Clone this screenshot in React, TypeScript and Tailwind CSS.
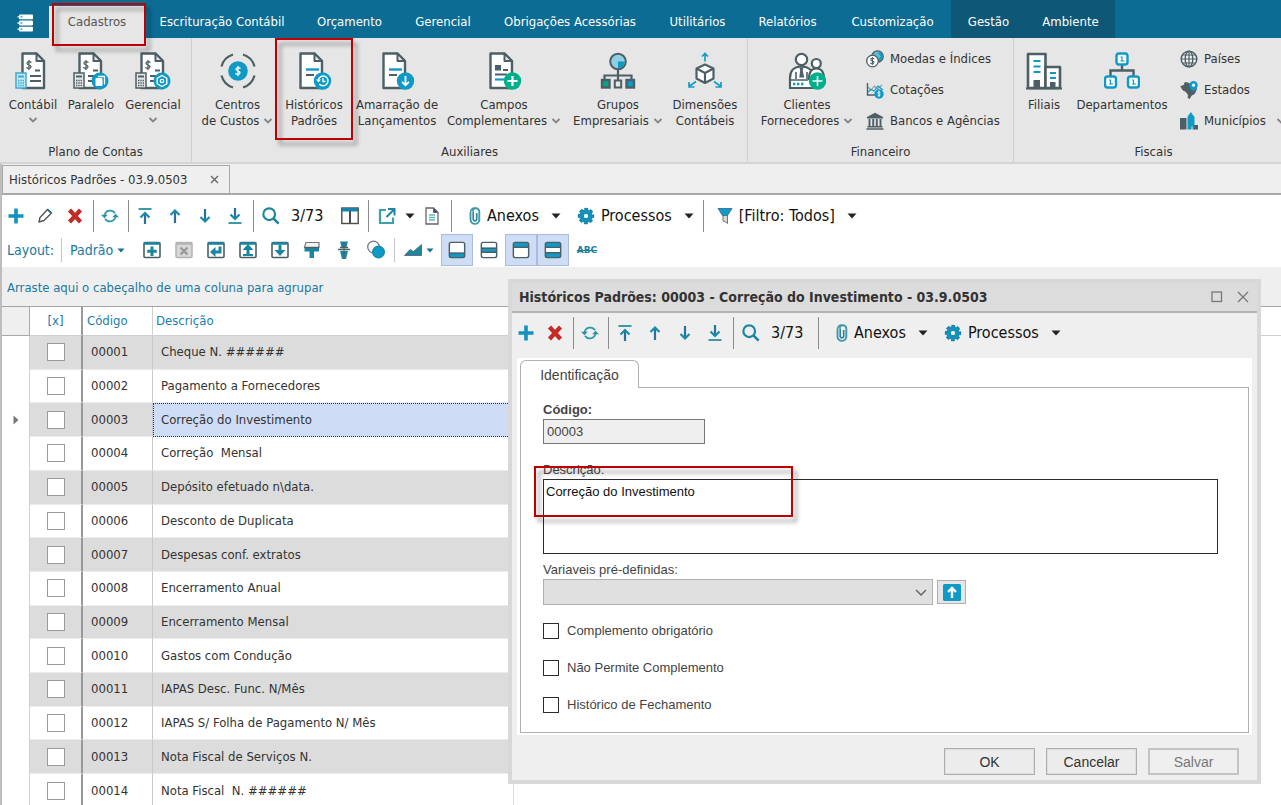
import type { ReactNode } from "react";

const INK = "#4d5f66";
const BLUE = "#0e9ac4";
const TEAL = "#1c86a0";

function Svg({ w, h, children, box }: { w: number; h: number; box?: string; children: ReactNode }) {
  return (
    <svg width={w} height={h} viewBox={box ?? `0 0 ${w} ${h}`} fill="none" aria-hidden="true" className="shrink-0">
      {children}
    </svg>
  );
}

/* ---------- Ribbon icons, 36 x 38 ---------- */

function Sheet({ x = 5 }: { x?: number }) {
  return (
    <g transform={`translate(${x} 0)`}>
      <path d="M1.500 1.500h14l7.500 7.500v27h-21.500z" fill="#fff" stroke={INK} strokeWidth="2.400" strokeLinejoin="round" />
      <path d="M15.500 1.500v7.500h7.500z" fill="#e6e6e6" stroke={INK} strokeWidth="2" strokeLinejoin="round" />
    </g>
  );
}

function Dollar({ x, y, color = INK, s = 1 }: { x: number; y: number; color?: string; s?: number }) {
  return (
    <path
      transform={`translate(${x} ${y}) scale(${s})`}
      d="M5 2.200C4.300 1.400 1 1.200 1 3.300 1 5.300 5 4.500 5 6.700 5 8.800 1.500 8.600.8 7.600M3 .3v9.400"
      stroke={color}
      strokeWidth="1.300"
      strokeLinecap="round"
    />
  );
}

function Calc({ color, fill }: { color: string; fill: string }) {
  return (
    <g>
      <rect x="1" y="21" width="10" height="15" fill={fill} stroke={color} strokeWidth="1.500" />
      <path d="M3 24.500h6" stroke={color} strokeWidth="2" />
      <path d="M3 28.500h6M3 31h6M3 33.500h6" stroke={color} strokeWidth="1.400" strokeDasharray="1.400 .9" />
    </g>
  );
}

function SheetLines() {
  return <path d="M20 18.500h5M15 24h11M15 29h11" stroke={INK} strokeWidth="2" />;
}

const IconContabil = () => (
  <Svg w={36} h={38}>
    <Sheet x={6} />
    <Dollar x={11} y={8} />
    <SheetLines />
    <Calc color="#3fa9cf" fill="#c4e9f5" />
  </Svg>
);

const IconParalelo = () => (
  <Svg w={36} h={38}>
    <Sheet x={5} />
    <Dollar x={10} y={8} />
    <SheetLines />
    <Calc color={INK} fill="#e6e6e6" />
    <circle cx="27" cy="29" r="8.500" fill={BLUE} />
    <rect x="22.500" y="26" width="7" height="8" rx="1" fill="#fff" />
    <path d="M25 24.500h6.500v8" stroke="#fff" strokeWidth="1.300" />
  </Svg>
);

const IconGerencial = () => (
  <Svg w={36} h={38}>
    <Sheet x={5} />
    <Dollar x={10} y={8} />
    <SheetLines />
    <Calc color={INK} fill="#e6e6e6" />
    <circle cx="27" cy="29" r="8.500" fill={BLUE} />
    <path d="M27 23.500l4.800 2.750v5.500L27 34.500l-4.800-2.750v-5.500z" stroke="#fff" strokeWidth="1.400" strokeLinejoin="round" />
    <circle cx="27" cy="29" r="1.700" stroke="#fff" strokeWidth="1.300" />
  </Svg>
);

const IconCentros = () => (
  <Svg w={36} h={38}>
    <path
      d="M1.500 14.500A17 17 0 0 1 13 2.500M23 2.500a17 17 0 0 1 11.500 12M34.500 23.500A17 17 0 0 1 23 35.500M13 35.500A17 17 0 0 1 1.500 23.500"
      stroke={INK}
      strokeWidth="2.200"
    />
    <circle cx="18" cy="19" r="9.800" fill={BLUE} />
    <Dollar x={15} y={14} color="#fff" />
  </Svg>
);

const IconHistoricos = () => (
  <Svg w={36} h={38}>
    <Sheet x={3} />
    <path d="M10 17.500h13" stroke={BLUE} strokeWidth="2.400" />
    <path d="M10 23h8" stroke={INK} strokeWidth="2" />
    <circle cx="26.500" cy="29" r="8.700" fill={BLUE} />
    <path d="M22.300 28a4.900 4.900 0 1 1 1 4" stroke="#fff" strokeWidth="1.400" />
    <path d="M20 27.500h5l-2.500 3z" fill="#fff" />
    <path d="M27 26v3.500h2.500" stroke="#fff" strokeWidth="1.300" />
  </Svg>
);

const IconAmarracao = () => (
  <Svg w={36} h={38}>
    <Sheet x={3} />
    <path d="M10 17.500h13" stroke={BLUE} strokeWidth="2.400" />
    <path d="M10 23h8" stroke={INK} strokeWidth="2" />
    <circle cx="26.500" cy="29" r="8.700" fill={BLUE} />
    <path d="M26.500 24v9M23 29.800l3.500 3.500 3.500-3.500" stroke="#fff" strokeWidth="1.800" />
  </Svg>
);

const IconCampos = () => (
  <Svg w={36} h={38}>
    <Sheet x={3} />
    <path d="M9 13h6v5.500H9z" fill={INK} />
    <path d="M17 18h5M9 22.500h12" stroke={INK} strokeWidth="1.800" />
    <path d="M9 27.500h9" stroke={BLUE} strokeWidth="2.200" />
    <circle cx="26.500" cy="29" r="8.700" fill="#00b08b" />
    <path d="M26.500 24v10M21.500 29h10" stroke="#fff" strokeWidth="2.200" />
  </Svg>
);

const IconGrupos = () => (
  <Svg w={36} h={38}>
    <circle cx="18" cy="9.500" r="7.800" fill="#8fcfe2" stroke={INK} strokeWidth="2" />
    <path d="M18 9.500h6.800A6.800 6.800 0 0 1 18 16.300z" fill={BLUE} />
    <path d="M18 18v10M4.500 28v-4.500h27V28" stroke={INK} strokeWidth="2.200" />
    <rect x="2" y="28" width="7.500" height="7.500" fill="#00a887" stroke={INK} strokeWidth="2.400" />
    <rect x="14.800" y="28.500" width="6.400" height="7" fill="#e6e6e6" stroke={INK} strokeWidth="2" />
    <rect x="26.500" y="28" width="7.500" height="7.500" fill={BLUE} stroke={INK} strokeWidth="2.400" />
  </Svg>
);

const IconDimensoes = () => (
  <Svg w={36} h={38}>
    <path d="M18 12.500l8.500 4v10l-8.500 4.500-8.500-4.500v-10z" fill="#fff" stroke={INK} strokeWidth="2.200" strokeLinejoin="round" />
    <path d="M9.500 16.500l8.500 4.500 8.500-4.500M18 21v10" stroke={INK} strokeWidth="2.200" />
    <path d="M18 9.500V2M15 4.500l3-3 3 3M9 29.500l-7 5M2 30v5h5.500M27 29.500l7 5M34 30v5h-5.500" stroke="#159dc6" strokeWidth="1.700" />
  </Svg>
);

const IconClientes = () => (
  <Svg w={38} h={38}>
    <path d="M2 26C2 19 6 14.500 13.500 14.500S25 19 25 26v10H2z" fill="#fff" stroke={INK} strokeWidth="2.200" />
    <path d="M21 27c0-7 2-10.500 7.500-10.500S36 20 36 27z" fill="#fff" stroke={INK} strokeWidth="2.200" />
    <circle cx="13.500" cy="7.500" r="5.700" fill="#fff" stroke={INK} strokeWidth="2.200" />
    <circle cx="28.300" cy="11.500" r="4.500" fill="#fff" stroke={INK} strokeWidth="2.200" />
    <path d="M11.500 15.500h4l-.8 3 1.500 7h-5l1-7z" fill={INK} />
    <path d="M8 20v7M19 20v7M2 28h18" stroke={INK} strokeWidth="1.600" />
    <path d="M5 32h11" stroke={BLUE} strokeWidth="2.400" strokeDasharray="2.400 1.600" />
    <circle cx="29.500" cy="29" r="8.700" fill="#00b08b" />
    <path d="M29.500 24v10M24.500 29h10" stroke="#fff" strokeWidth="1.600" />
  </Svg>
);

const IconFiliais = () => (
  <Svg w={36} h={38}>
    <path d="M2 36V2h17.500v34z" fill="#fff" stroke={INK} strokeWidth="2.600" strokeLinejoin="round" />
    <path d="M19.500 36V15H34v21z" fill="#fff" stroke={INK} strokeWidth="2.600" strokeLinejoin="round" />
    <path d="M7.500 9h7M7.500 14.500h7M7.500 20h7M24 21h6M24 26h6" stroke={BLUE} strokeWidth="2" />
    <path d="M7.500 28h6.500v8H7.500zM24 30h5.500v6H24z" fill={INK} />
    <path d="M0 36.500h36" stroke={INK} strokeWidth="2" />
  </Svg>
);

const IconDepartamentos = () => (
  <Svg w={36} h={38}>
    <path d="M18 13v5.500M6.500 24v-5.500h23V24" stroke={INK} strokeWidth="2.400" />
    {[[12.5, 1.5], [1, 24.5], [24, 24.5]].map(([x, y]) => (
      <g key={`${x}-${y}`}>
        <rect x={x} y={y} width="11" height="11" rx="2.500" fill="#fff" stroke={BLUE} strokeWidth="2.400" />
        <path d={`M${x + 4} ${y + 3.500}h1.500v4M${x + 4} ${y + 7.500}h4`} stroke={BLUE} strokeWidth="1.200" />
      </g>
    ))}
  </Svg>
);

/* ---------- Small ribbon icons, 18 x 18 ---------- */

const IconMoedas = () => (
  <Svg w={18} h={18}>
    <circle cx="11.500" cy="6.500" r="5.700" fill="#5bbcd8" stroke={INK} strokeWidth="1.300" />
    <path d="M13 2.500l3 4-3 4" stroke={BLUE} strokeWidth="2" />
    <circle cx="6.500" cy="11" r="5.800" fill="#fff" stroke={INK} strokeWidth="1.300" />
    <Dollar x={4} y={7} s={0.8} />
  </Svg>
);
const IconCotacoes = () => (
  <Svg w={18} h={18}>
    <path d="M1.500 2v12H11" stroke={INK} strokeWidth="1.400" />
    <path d="M2 6l3 3 3.500-4 3 3L16 4" stroke="#8a979b" strokeWidth="1.100" />
    <path d="M2 11l3-2.500 3 1.500 4-5 5 4" stroke={BLUE} strokeWidth="1.100" />
    <circle cx="13" cy="13" r="4.700" fill={BLUE} />
    <Dollar x={11.200} y={9.800} s={0.6} color="#fff" />
  </Svg>
);
const IconBanco = () => (
  <Svg w={18} h={18}>
    <path d="M9 .8L17 5v1.500H1V5z" fill={INK} />
    <path d="M3.500 7v7M7.200 7v7M10.800 7v7M14.500 7v7" stroke={INK} strokeWidth="1.900" />
    <path d="M1.500 14.700h15M.5 17h17" stroke={INK} strokeWidth="1.500" />
  </Svg>
);
const IconPaises = () => (
  <Svg w={18} h={18}>
    <circle cx="9" cy="9" r="7.800" stroke={INK} strokeWidth="1.500" fill="#f4f4f4" />
    <ellipse cx="9" cy="9" rx="3.800" ry="7.800" stroke={INK} strokeWidth="1.400" />
    <path d="M9 1v16M1.500 9h15M2.500 5h13M2.500 13h13" stroke={INK} strokeWidth="1.200" />
  </Svg>
);
const IconEstados = () => (
  <Svg w={18} h={18}>
    <path d="M.8 5.500L4 4.500 5 1.500l4 .8 1.500 1.500L14 5.500l2.500 1.800-1 3.200L14 13l-2.500 1-2 3.500-1.500-1 .5-2.500L6 10.500 3 9z" fill={INK} stroke={INK} />
    <path d="M13.500 0a4.200 4.200 0 0 1 4.200 4.200c0 3-4.200 6.300-4.200 6.300S9.300 7.200 9.300 4.200A4.200 4.200 0 0 1 13.500 0z" fill={BLUE} />
    <circle cx="13.500" cy="4.200" r="1.600" fill="#fff" />
  </Svg>
);
const IconMunicipios = () => (
  <Svg w={18} h={18}>
    <path d="M0 6h6.500v11.500H0z" fill={INK} />
    <path d="M7.500 17.500V5L9 2.500 11 0l1.500 2.500L14.500 5v12.500h-2v-3h-1v3z" fill={BLUE} />
    <path d="M14 13h4v4.500h-4z" fill={INK} />
  </Svg>
);

/* ---------- Toolbar icons, 18 x 18 ---------- */

const TPlus = () => (
  <Svg w={18} h={18}><path d="M9 1.500v15M1.500 9h15" stroke="#1391bf" strokeWidth="3.600" /></Svg>
);
const TPencil = () => (
  <Svg w={18} h={18}>
    <path d="M3 15l1-4.500 7.500-8L15.500 6 8 13.500z" fill="#fff" stroke="#555" strokeWidth="1.400" strokeLinejoin="round" />
    <path d="M11 3l1-1.200 4 3.700L14.800 7z" fill="#1f6f94" />
  </Svg>
);
const TDelete = () => (
  <Svg w={18} h={18}><path d="M3.500 3l11 12M14.500 3l-11 12" stroke="#c52b26" strokeWidth="4.200" /></Svg>
);
const TRefresh = () => (
  <Svg w={18} h={18} box="0 0 20 18">
    <path d="M4 8a6.300 6.300 0 0 1 11.500-2M16 10a6.300 6.300 0 0 1-11.500 2" stroke="#2c9aa5" strokeWidth="2" />
    <path d="M0 7.500h7.500L3.800 11.500zM12.500 10.500H20L16.200 6.500z" fill="#2c8fa0" />
  </Svg>
);
const Arrow = ({ down, bar }: { down?: boolean; bar?: boolean }) => (
  <Svg w={18} h={18}>
    <g transform={down ? "rotate(180 9 9)" : undefined}>
      <path d={bar ? "M9 17V6" : "M9 16V4"} stroke="#2a6f9e" strokeWidth="2.200" />
      <path d={bar ? "M4.500 10.500L9 6l4.500 4.500" : "M4.500 8L9 3.500 13.500 8"} stroke="#1a8bab" strokeWidth="2.200" />
      {bar && <path d="M2.500 2h13" stroke="#3d9aa3" strokeWidth="2" />}
    </g>
  </Svg>
);
const TSearch = () => (
  <Svg w={18} h={18} box="0 0 20 20">
    <circle cx="8" cy="8" r="6.500" stroke={TEAL} strokeWidth="2.400" />
    <path d="M12.500 12.500l6 6" stroke={TEAL} strokeWidth="2.800" />
  </Svg>
);
const TColumns = () => (
  <Svg w={18} h={18}>
    <rect x=".8" y="1" width="16.400" height="15.500" fill="#fff" stroke="#4d4d4d" strokeWidth="1.400" />
    <path d="M1 2.800h16" stroke="#1483ad" strokeWidth="3.400" />
    <path d="M9 4v12" stroke="#4d4d4d" strokeWidth="2" />
  </Svg>
);
const TExport = () => (
  <Svg w={18} h={18}>
    <path d="M8 3H2v13h13v-5.500" stroke="#3aa2ab" strokeWidth="2.200" />
    <path d="M10 2h6.500v6.500M16 2.500L8.500 10" stroke="#1b84a7" strokeWidth="2" />
  </Svg>
);
const TDoc = () => (
  <Svg w={14} h={18}>
    <path d="M1 1h7.500L13 5.500V17H1z" fill="#fff" stroke="#666" strokeWidth="1.300" />
    <path d="M8.500 1v4.500H13z" fill="#447" stroke="#666" />
    <path d="M4 8h6M4 10.500h6M4 13h6" stroke="#5db9bd" strokeWidth="1.300" />
  </Svg>
);
const TClip = () => (
  <Svg w={12} h={18}>
    <path d="M1.500 5.500v7a4.300 4.300 0 0 0 8.800 0V4.600a3.400 3.400 0 0 0-6.800 0" stroke="#3f9aa4" strokeWidth="1.900" />
    <path d="M1.500 6V4.800A4.400 4.400 0 0 1 6 .9" stroke="#3f9aa4" strokeWidth="1.500" />
    <path d="M4.200 4.500v8a1.800 1.800 0 0 0 3.500 0V6" stroke="#2f7f9c" strokeWidth="1.600" />
  </Svg>
);
const TGear = () => (
  <Svg w={18} h={18}>
    <circle cx="9" cy="9" r="6.600" stroke={TEAL} strokeWidth="3.200" strokeDasharray="3.450 1.730" strokeDashoffset="1.700" />
    <circle cx="9" cy="9" r="4.400" stroke="#1590ba" strokeWidth="4.600" />
    <circle cx="9" cy="9" r="1.900" fill="#eef3f5" />
  </Svg>
);
const TFunnel = () => (
  <Svg w={16} h={18}>
    <path d="M6 8h4.500v8.500l-2-1.500L6 14z" fill="#d9d9d9" stroke="#777" />
    <path d="M1 1.500h14L10.500 8.500h-5z" fill="#1698c6" stroke="#3b7f9c" />
  </Svg>
);

/* ---------- Layout bar icons, 18 x 18 ---------- */

function Win({ muted, children }: { muted?: boolean; children: ReactNode }) {
  const c = muted ? "#b5b5b5" : INK;
  return (
    <Svg w={18} h={18}>
      <rect x="1" y="1.500" width="16" height="15" rx="1" fill={muted ? "#d8d8d8" : "#fff"} stroke={c} strokeWidth="1.600" />
      <path d="M1 2.500h16" stroke={muted ? c : TEAL} strokeWidth="2.600" />
      {children}
    </Svg>
  );
}
const LAdd = () => <Win><path d="M9 5.500v9.500M4.200 10.200h9.600" stroke={TEAL} strokeWidth="3" /></Win>;
const LRemove = () => <Win muted><path d="M5.500 6.500l7 7M12.500 6.500l-7 7" stroke="#999" strokeWidth="2.400" /></Win>;
const LReturn = () => (
  <Win>
    <path d="M13 5.500v5.500H7" stroke={TEAL} strokeWidth="3" />
    <path d="M3 11l5.500-5v10z" fill={TEAL} />
  </Win>
);
const LUp = () => (
  <Win>
    <path d="M9 14V7" stroke={TEAL} strokeWidth="3" />
    <path d="M3.500 9L9 3l5.500 6z" fill={TEAL} />
    <path d="M4 14h10" stroke={TEAL} strokeWidth="2" />
  </Win>
);
const LDown = () => (
  <Win>
    <path d="M9 4v7" stroke={TEAL} strokeWidth="3" />
    <path d="M3.500 9L9 15l5.500-6z" fill={TEAL} />
  </Win>
);
const LBrush = () => (
  <Svg w={18} h={18}>
    <path d="M3 1.500h13v5H1.500z" fill="#f2f2f2" stroke="#777" strokeWidth="1.200" />
    <path d="M1.500 6h14.500v4.500H11V17H6.500v-6.500h-5z" fill={TEAL} />
    <path d="M1.500 6.500H16" stroke={INK} strokeWidth="1.400" />
  </Svg>
);
const LPin = () => (
  <Svg w={18} h={18}>
    <path d="M5 .5h8L11.500 6h-5zM5 10h8l-2 8H7z" fill={TEAL} />
    <path d="M3 8.500h12M5 6.500h8" stroke={INK} strokeWidth="1.500" />
    <path d="M9 1v16" stroke={INK} strokeWidth="1" />
  </Svg>
);
const LCircles = () => (
  <Svg w={20} h={20}>
    <circle cx="7.500" cy="7" r="5.800" fill="#fff" stroke="#777" strokeWidth="1.300" />
    <circle cx="12.500" cy="12" r="5.800" fill={BLUE} stroke={TEAL} strokeWidth="1.300" />
  </Svg>
);
const LChart = () => (
  <Svg w={18} h={14}>
    <path d="M.5 12.500L6 6.500l3.500 2L17.500 1.500v11z" fill={TEAL} stroke={INK} strokeWidth=".8" />
  </Svg>
);
const Pane = ({ d, lines }: { d: string; lines?: string }) => (
  <Svg w={18} h={18} box="0 0 20 20">
    <rect x="1.500" y="1.500" width="17" height="17" rx="2" fill="#fff" />
    <path d={d} fill={BLUE} />
    {lines && <path d={lines} stroke={INK} strokeWidth="1.500" />}
    <rect x="1.500" y="1.500" width="17" height="17" rx="2" stroke={INK} strokeWidth="1.600" />
  </Svg>
);

/* ---------- Shared pieces ---------- */

const Chevron = () => (
  <Svg w={10} h={6}><path d="M1.500 1L5 4.500 8.500 1" stroke="#858585" strokeWidth="1.800" /></Svg>
);
const Caret = () => (
  <Svg w={10} h={6}><path d="M.5.500h9L5 5.500z" fill="#222" /></Svg>
);
const BlueCaret = () => (
  <Svg w={8} h={5}><path d="M.5.500h7L4 4.500z" fill="#176f96" /></Svg>
);

function Callout({ className }: { className: string }) {
  return (
    <span
      aria-hidden="true"
      className={`pointer-events-none absolute z-10 border-2 border-[#c00000] drop-shadow-[4px_5px_2px_rgba(0,0,0,0.4)] ${className}`}
    />
  );
}

function BigButton({ icon, lines, chevron, w, callout }: { icon: ReactNode; lines: string[]; chevron?: "inline" | "below"; w: string; callout?: boolean }) {
  return (
    <button type="button" className={`relative flex h-[102px] shrink-0 flex-col items-center pt-[14px] ${w}`}>
      {icon}
      <span className="mt-[7px] block whitespace-nowrap text-center leading-4">
        {lines.map((line, i) => (
          <span key={line} className="flex items-center justify-center gap-1">
            {line}
            {chevron === "inline" && i === lines.length - 1 && <Chevron />}
          </span>
        ))}
        {chevron === "below" && <span className="flex h-[14px] items-center justify-center"><Chevron /></span>}
      </span>
      {callout && <Callout className="inset-0" />}
    </button>
  );
}

function SmallButton({ icon, label, chevron }: { icon: ReactNode; label: string; chevron?: boolean }) {
  return (
    <button type="button" className="flex h-[31px] items-center gap-[6px] whitespace-nowrap">
      {icon}
      {label}
      {chevron && <span className="ml-1"><Chevron /></span>}
    </button>
  );
}

function Group({ title, w, pad, children }: { title: string; w: string; pad: string; children: ReactNode }) {
  return (
    <section aria-label={title} className={`flex shrink-0 flex-col border-r border-[#cfcfcf] ${w}`}>
      <div className={`flex ${pad}`}>{children}</div>
      <p className="pt-[4px] text-center leading-4">{title}</p>
    </section>
  );
}

function Tool({ label, w = "w-[30px]", children }: { label: string; w?: string; children: ReactNode }) {
  return (
    <button type="button" aria-label={label} className={`flex h-8 shrink-0 items-center justify-center ${w}`}>
      {children}
    </button>
  );
}

function MenuTool({ icon, label, gap }: { icon: ReactNode; label: string; gap: string }) {
  return (
    <button type="button" className={`flex h-8 shrink-0 items-center whitespace-nowrap ${gap}`}>
      <span className="mr-[6px]">{icon}</span>
      {label}
      <span className="ml-3"><Caret /></span>
    </button>
  );
}

const Sep = () => <span className="ml-[3px] mr-px h-8 w-px shrink-0 bg-[#8c8c8c]" />;

function Navigation() {
  return (
    <>
      <Tool label="Primeiro"><Arrow bar /></Tool>
      <Tool label="Anterior"><Arrow /></Tool>
      <Tool label="Próximo"><Arrow down /></Tool>
      <Tool label="Último"><Arrow bar down /></Tool>
      <Sep />
      <Tool label="Pesquisar" w="w-8"><TSearch /></Tool>
      <span className="w-12 pl-1">3/73</span>
    </>
  );
}

function LayoutTool({ label, on, children }: { label: string; on?: boolean; children: ReactNode }) {
  return (
    <button
      type="button"
      aria-label={label}
      aria-pressed={on}
      className={`flex h-8 w-8 shrink-0 items-center justify-center border ${on ? "border-[#aab9dc] bg-[#cfdcf5]" : "border-transparent"}`}
    >
      {children}
    </button>
  );
}

const tabs = [
  { label: "Escrituração Contábil", w: "w-[154px]" },
  { label: "Orçamento", w: "w-[101px]" },
  { label: "Gerencial", w: "w-[86px]" },
  { label: "Obrigações Acessórias", w: "w-[168px]" },
  { label: "Utilitários", w: "w-[87px]" },
  { label: "Relatórios", w: "w-[93px]" },
  { label: "Customização", w: "w-[117px]" },
];

const rows = [
  ["00001", "Cheque N. ######"],
  ["00002", "Pagamento a Fornecedores"],
  ["00003", "Correção do Investimento"],
  ["00004", "Correção  Mensal"],
  ["00005", "Depósito efetuado n\\data."],
  ["00006", "Desconto de Duplicata"],
  ["00007", "Despesas conf. extratos"],
  ["00008", "Encerramento Anual"],
  ["00009", "Encerramento Mensal"],
  ["00010", "Gastos com Condução"],
  ["00011", "IAPAS Desc. Func. N/Mês"],
  ["00012", "IAPAS S/ Folha de Pagamento N/ Mês"],
  ["00013", "Nota Fiscal de Serviços N."],
  ["00014", "Nota Fiscal  N. ######"],
];

const selected = "00003";

function TopBar() {
  return (
    <nav className="flex h-[38px] shrink-0 items-stretch bg-[#0d6c94] text-white">
      <button type="button" aria-label="Menu" className="flex w-[49px] items-center justify-center pt-2">
        <Svg w={16} h={18}>
          <rect x="2" y=".5" width="14" height="4.800" rx="1" fill="#fff" />
          <rect x="2" y="6.600" width="14" height="4.800" rx="1" fill="#fff" />
          <rect x="2" y="12.700" width="14" height="4.800" rx="1" fill="#fff" />
          <path d="M.5 2.900h3M.5 9h3M.5 15.100h3" stroke="#fff" strokeWidth="1.400" />
          <path d="M3.500 2.900h2M3.500 9h2M3.500 15.100h2" stroke="#0d6c94" strokeWidth="1" />
        </Svg>
      </button>
      <a href="#cadastros" aria-current="page" className="relative mt-[6px] flex w-24 items-center justify-center bg-[#e6e6e6] text-[#555]">
        Cadastros
        <Callout className="-top-[3px] left-[3px] h-[43px] w-[94px]" />
      </a>
      {tabs.map((t) => (
        <a key={t.label} href="#aba" className={`flex shrink-0 items-center justify-center whitespace-nowrap pt-[6px] ${t.w}`}>
          {t.label}
        </a>
      ))}
      <div className="flex w-[164px] shrink-0 bg-[#0f5777]">
        <a href="#gestao" className="flex w-[75px] items-center justify-center pt-[6px]">Gestão</a>
        <a href="#ambiente" className="flex flex-1 items-center justify-center pt-[6px]">Ambiente</a>
      </div>
    </nav>
  );
}

function Ribbon() {
  return (
    <div className="flex h-[126px] shrink-0 overflow-hidden border-b-2 border-[#d4d4d4] bg-[#e6e6e6] text-[#333]">
      <Group title="Plano de Contas" w="w-48" pad="pl-1">
        <BigButton w="w-[58px]" icon={<IconContabil />} lines={["Contábil"]} chevron="below" />
        <BigButton w="w-[58px]" icon={<IconParalelo />} lines={["Paralelo"]} />
        <BigButton w="w-[66px]" icon={<IconGerencial />} lines={["Gerencial"]} chevron="below" />
      </Group>
      <Group title="Auxiliares" w="w-[556px]" pad="pl-2">
        <BigButton w="w-[75px]" icon={<IconCentros />} lines={["Centros", "de Custos"]} chevron="inline" />
        <BigButton w="w-[78px]" icon={<IconHistoricos />} lines={["Históricos", "Padrões"]} callout />
        <BigButton w="w-[88px]" icon={<IconAmarracao />} lines={["Amarração de", "Lançamentos"]} />
        <BigButton w="w-[126px]" icon={<IconCampos />} lines={["Campos", "Complementares"]} chevron="inline" />
        <BigButton w="w-[102px]" icon={<IconGrupos />} lines={["Grupos", "Empresariais"]} chevron="inline" />
        <BigButton w="w-[72px]" icon={<IconDimensoes />} lines={["Dimensões", "Contábeis"]} />
      </Group>
      <Group title="Financeiro" w="w-[266px]" pad="pl-2">
        <BigButton w="w-[102px]" icon={<IconClientes />} lines={["Clientes", "Fornecedores"]} chevron="inline" />
        <div className="pl-2 pt-[5px]">
          <SmallButton icon={<IconMoedas />} label="Moedas e Índices" />
          <SmallButton icon={<IconCotacoes />} label="Cotações" />
          <SmallButton icon={<IconBanco />} label="Bancos e Agências" />
        </div>
      </Group>
      <Group title="Fiscais" w="w-[280px]" pad="pl-[3px]">
        <BigButton w="w-[54px]" icon={<IconFiliais />} lines={["Filiais"]} />
        <BigButton w="w-[102px]" icon={<IconDepartamentos />} lines={["Departamentos"]} />
        <div className="pl-[7px] pt-[5px]">
          <SmallButton icon={<IconPaises />} label="Países" />
          <SmallButton icon={<IconEstados />} label="Estados" />
          <SmallButton icon={<IconMunicipios />} label="Municípios" chevron />
        </div>
      </Group>
    </div>
  );
}

function MainToolbar() {
  return (
    <div role="toolbar" aria-label="Registros" className="flex h-[38px] shrink-0 items-center overflow-hidden pt-[3px] text-[16px] text-[#111]">
      <Tool label="Novo" w="w-7"><TPlus /></Tool>
      <Tool label="Editar"><TPencil /></Tool>
      <Tool label="Excluir"><TDelete /></Tool>
      <Sep />
      <Tool label="Atualizar"><TRefresh /></Tool>
      <Sep />
      <Navigation />
      <Tool label="Colunas"><TColumns /></Tool>
      <Sep />
      <Tool label="Exportar" w="w-[34px]"><TExport /></Tool>
      <Tool label="Opções de exportação" w="w-3"><Caret /></Tool>
      <Tool label="Relatório" w="w-8"><TDoc /></Tool>
      <Sep />
      <MenuTool gap="ml-4" icon={<TClip />} label="Anexos" />
      <MenuTool gap="ml-4" icon={<TGear />} label="Processos" />
      <span className="ml-[6px] flex"><Sep /></span>
      <MenuTool gap="ml-3" icon={<TFunnel />} label="[Filtro: Todos]" />
    </div>
  );
}

function LayoutBar() {
  return (
    <div role="toolbar" aria-label="Layout" className="flex h-[34px] shrink-0 items-center overflow-hidden pl-[5px] text-[#1b78a3]">
      <span className="w-[54px] text-[14px]">Layout:</span>
      <span className="h-6 w-px bg-[#c4c4c4]" />
      <button type="button" className="flex w-[74px] items-center gap-1 pl-2 text-[14px]">Padrão <BlueCaret /></button>
      <LayoutTool label="Adicionar"><LAdd /></LayoutTool>
      <LayoutTool label="Remover"><LRemove /></LayoutTool>
      <LayoutTool label="Restaurar"><LReturn /></LayoutTool>
      <LayoutTool label="Exportar layout"><LUp /></LayoutTool>
      <LayoutTool label="Importar layout"><LDown /></LayoutTool>
      <LayoutTool label="Formatar"><LBrush /></LayoutTool>
      <LayoutTool label="Fixar"><LPin /></LayoutTool>
      <LayoutTool label="Comparar"><LCircles /></LayoutTool>
      <span className="mx-[2px] h-6 w-px bg-[#c4c4c4]" />
      <button type="button" aria-label="Gráfico" className="flex w-11 items-center justify-center gap-1">
        <LChart /><BlueCaret />
      </button>
      <LayoutTool label="Painel inferior" on><Pane d="M2 13h16v5H2z" lines="M2 13.500h16" /></LayoutTool>
      <LayoutTool label="Painel central"><Pane d="M2 7.500h16v5H2z" lines="M2 8h16M2 12.500h16" /></LayoutTool>
      <LayoutTool label="Painel superior" on><Pane d="M2 2h16v5H2z" lines="M2 7h16" /></LayoutTool>
      <LayoutTool label="Painéis duplos" on><Pane d="M2 2h16v5H2zM2 13h16v5H2z" lines="M2 7h16M2 13h16" /></LayoutTool>
      <button type="button" className="flex w-9 items-center justify-center font-['DejaVu_Sans',sans-serif] text-[9px] font-bold text-[#1c7f9b] line-through">ABC</button>
    </div>
  );
}

function Grid() {
  return (
    <div className="min-h-0 flex-1 overflow-hidden border-t border-[#a3a3a3] bg-white">
      <div className="h-[29px] border-b border-[#cfcfcf]" />
      <table className="-mt-[29px] h-[501px] w-[512px] table-fixed border-separate border-spacing-0 text-left text-[#333]">
        <colgroup>
          <col className="w-7" />
          <col className="w-[53px]" />
          <col className="w-[70px]" />
          <col />
        </colgroup>
        <thead>
          <tr className="h-[29px] text-[#1580ad]">
            <th aria-label="Indicador" className="h-[29px] border-b border-r border-[#a8a8a8] bg-[#efefef] p-0" />
            <th className="border-b border-r-2 border-b-[#cfcfcf] border-r-[#999] p-0 text-center font-normal">[x]</th>
            <th className="border-b border-r border-[#cfcfcf] p-0 pl-1 font-normal">Código</th>
            <th className="border-b border-[#cfcfcf] p-0 pl-[3px] font-normal">Descrição</th>
          </tr>
        </thead>
        <tbody>
          {rows.map(([code, text]) => (
            <tr key={code} className="group">
              <td className="border-r border-[#cfcfcf] bg-white p-0">
                {code === selected && (
                  <span className="flex justify-center">
                    <Svg w={6} h={10}><path d="M.5.500L5.500 5 .5 9.500z" fill="#777" /></Svg>
                  </span>
                )}
              </td>
              <td className="border-b border-r-2 border-b-[#ececec] border-r-[#999] p-0 group-odd:bg-[#dcdcdc]">
                <input
                  type="checkbox"
                  aria-label={`Selecionar ${code}`}
                  className="mx-auto block h-[18px] w-[18px] appearance-none border border-[#9a9a9a] bg-white"
                />
              </td>
              <td className="border-b border-r border-b-[#ececec] border-r-[#c8c8c8] p-0 pl-2 group-odd:bg-[#dcdcdc]">{code}</td>
              {code === selected ? (
                <td className="border border-dotted border-[#333] bg-[#cfdcf5] p-0 pl-[7px]">{text}</td>
              ) : (
                <td className="whitespace-pre border-b border-r border-b-[#ececec] border-r-[#dcdcdc] p-0 pl-2 group-odd:bg-[#dcdcdc]">{text}</td>
              )}
            </tr>
          ))}
        </tbody>
      </table>
    </div>
  );
}

function Check({ id, label }: { id: string; label: string }) {
  return (
    <div className="flex h-[17px] items-center gap-2">
      <input id={id} type="checkbox" className="h-4 w-4 appearance-none border border-[#2b2b2b] bg-white" />
      <label htmlFor={id}>{label}</label>
    </div>
  );
}

function RecordDialog() {
  return (
    <div
      role="dialog"
      aria-labelledby="dialog-title"
      className="absolute left-[508px] top-[279px] z-20 w-[753px] border-4 border-[#d8d8d8] bg-[#efefef]"
    >
      <header className="flex h-[30px] items-center justify-between border-b-2 border-[#b4b4b4] bg-[#dcdcdc] pl-[7px] pr-2">
        <h2 id="dialog-title" className="whitespace-nowrap text-[14px] font-bold text-[#333]">
          Históricos Padrões: 00003 - Correção do Investimento - 03.9.0503
        </h2>
        <div className="flex gap-[14px]">
          <button type="button" aria-label="Maximizar"><Svg w={12} h={12}><rect x="1" y="1" width="9.500" height="9.500" stroke="#777" strokeWidth="1.300" /></Svg></button>
          <button type="button" aria-label="Fechar"><Svg w={12} h={12}><path d="M1 1l10 10M11 1L1 11" stroke="#777" strokeWidth="1.300" /></Svg></button>
        </div>
      </header>

      <div role="toolbar" aria-label="Registro" className="flex h-[45px] items-center overflow-hidden pb-[5px] text-[16px] text-[#111]">
        <Tool label="Novo" w="w-7"><TPlus /></Tool>
        <Tool label="Excluir"><TDelete /></Tool>
        <Sep />
        <Tool label="Atualizar"><TRefresh /></Tool>
        <Sep />
        <Navigation />
        <Sep />
        <MenuTool gap="ml-4" icon={<TClip />} label="Anexos" />
        <MenuTool gap="ml-4" icon={<TGear />} label="Processos" />
      </div>

      <div className="mx-[5px] bg-white px-[3px] pb-[2px] pt-[2px] font-['Liberation_Sans',Arial,sans-serif] text-[13px] leading-4 text-[#444]">
        <button type="button" role="tab" aria-selected="true" className="relative -mb-px flex h-7 w-[119px] items-center justify-center rounded-t-md border border-b-0 border-[#b0b0b0] bg-white text-[14px]">
          Identificação
        </button>
        <div className="h-[346px] border border-[#b0b0b0] pl-[22px] pr-[30px] pt-[14px]">
          <label htmlFor="codigo" className="block font-bold">Código:</label>
          <input id="codigo" readOnly value="00003" className="mt-px block h-[25px] w-[162px] border border-[#777] bg-[#efefef] px-[3px]" />
          <label htmlFor="descricao" className="mt-[18px] block">Descrição:</label>
          <div className="relative mt-px">
            <textarea id="descricao" defaultValue="Correção do Investimento" className="block h-[75px] w-full resize-none border border-[#2b2b2b] bg-white px-[2px] py-1 text-[#111]" />
            <Callout className="-left-[9px] -top-[13px] h-[51px] w-[259px]" />
          </div>
          <label htmlFor="variaveis" className="mt-2 block">Variaveis pré-definidas:</label>
          <div className="mt-px flex items-center gap-1">
            <div className="relative w-[390px]">
              <select id="variaveis" className="block h-[26px] w-full appearance-none border border-[#b0b0b0] bg-[#e0e0e0]" />
              <span className="pointer-events-none absolute right-[6px] top-[10px]">
                <Svg w={12} h={8}><path d="M1 1l5 5 5-5" stroke="#666" strokeWidth="1.500" /></Svg>
              </span>
            </div>
            <button type="button" aria-label="Inserir variável" className="flex h-6 w-[29px] items-center justify-center border border-[#b0b0b0] bg-[#e6e6e6]">
              <Svg w={18} h={17}>
                <rect width="18" height="17" rx="1.500" fill={BLUE} />
                <path d="M9 14V5M5 8l4-4 4 4" stroke="#fff" strokeWidth="2.400" />
              </Svg>
            </button>
          </div>
          <div className="mt-[17px] flex flex-col gap-5">
            <Check id="obrigatorio" label="Complemento obrigatório" />
            <Check id="nao-permite" label="Não Permite Complemento" />
            <Check id="fechamento" label="Histórico de Fechamento" />
          </div>
        </div>
      </div>

      <footer className="flex justify-end gap-[11px] pb-[5px] pr-[18px] pt-[13px] font-['Liberation_Sans',Arial,sans-serif] text-[14px] text-[#333]">
        <button type="button" className="h-[27px] w-[91px] border border-[#adadad] bg-[#ececec] ring-1 ring-inset ring-[#dedede]">OK</button>
        <button type="button" className="h-[27px] w-[91px] border border-[#adadad] bg-[#ececec] ring-1 ring-inset ring-[#dedede]">Cancelar</button>
        <button type="button" className="h-[27px] w-[91px] border-2 border-[#c4c4c4] bg-[#efefef] text-[#777]">Salvar</button>
      </footer>
    </div>
  );
}

export default function App() {
  return (
    <div className="relative flex h-screen flex-col overflow-hidden bg-[#efefef] font-['DejaVu_Sans_Condensed','DejaVu_Sans',sans-serif] text-[13px] leading-4">
      <TopBar />
      <Ribbon />
      <main className="flex min-h-0 flex-1 flex-col border-l-2 border-[#bdbdbd]">
        <div className="flex h-[31px] shrink-0 items-stretch border-b-2 border-[#a8a8a8] pt-px">
          <div className="-mb-[2px] flex w-[228px] items-center justify-between border border-b-2 border-[#a8a8a8] bg-[#efefef] pl-[6px] pr-[10px] text-[#333]">
            <span className="whitespace-nowrap">Históricos Padrões - 03.9.0503</span>
            <button type="button" aria-label="Fechar aba">
              <Svg w={9} h={9}><path d="M1 1l7 7M8 1L1 8" stroke="#666" strokeWidth="1.400" /></Svg>
            </button>
          </div>
        </div>
        <div className="shrink-0 bg-white">
          <MainToolbar />
          <LayoutBar />
        </div>
        <p className="flex h-[39px] shrink-0 items-center pl-[5px] pt-[2px] text-[#1b78a3]">
          Arraste aqui o cabeçalho de uma coluna para agrupar
        </p>
        <Grid />
      </main>
      <RecordDialog />
    </div>
  );
}
